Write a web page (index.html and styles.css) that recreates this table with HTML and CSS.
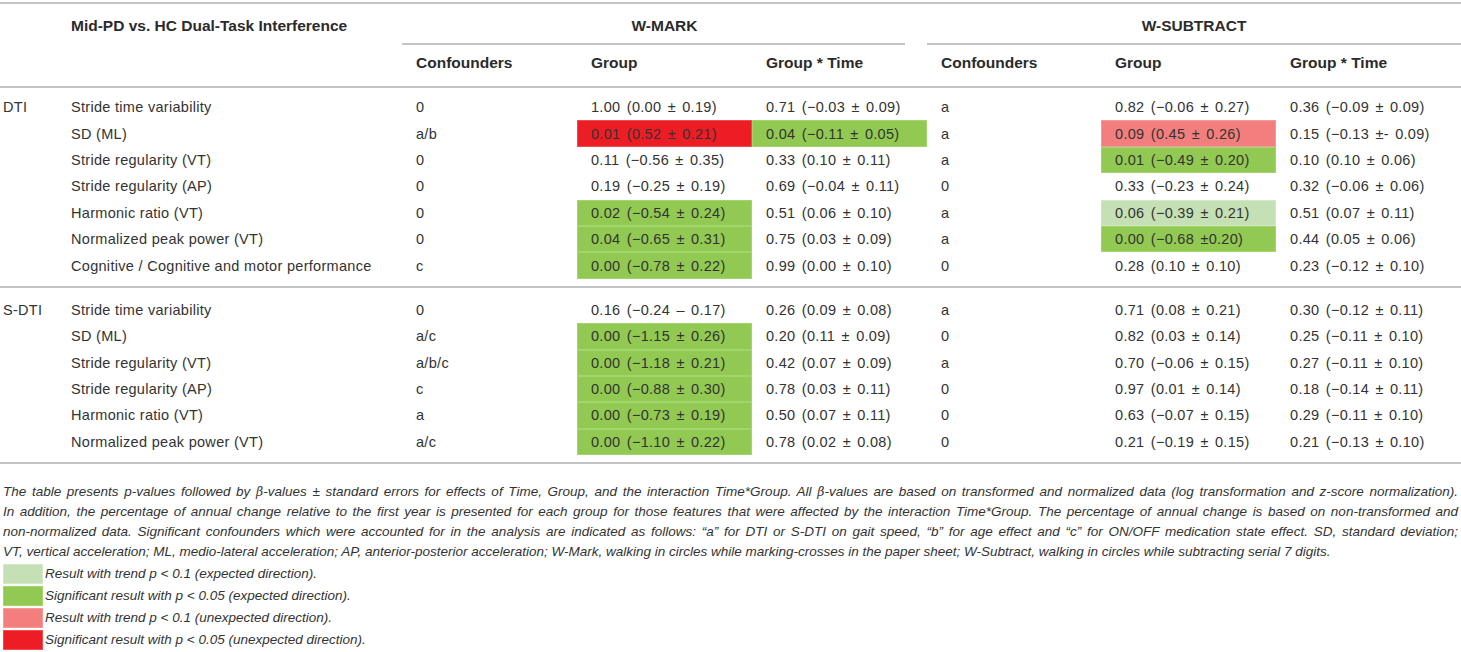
FILE: index.html
```html
<!DOCTYPE html>
<html lang="en">
<head>
  <meta charset="UTF-8" />
  <meta name="viewport" content="width=device-width, initial-scale=1.0" />
  <title>Dual-Task Interference Table</title>
  <link rel="stylesheet" href="styles.css">
</head>
<body>

  <section class="table-wrap">
    <table class="results">
      <colgroup>
        <col class="c-group">
        <col class="c-label">
        <col class="c-std">
        <col class="c-std">
        <col class="c-std">
        <col class="c-conf2">
        <col class="c-std">
        <col class="c-last">
      </colgroup>
      <thead>
        <tr class="head-top">
          <th></th>
          <th>Mid-PD vs. HC Dual-Task Interference</th>
          <th colspan="3" class="task"><div class="task-label mark">W-MARK</div></th>
          <th colspan="3" class="task"><div class="task-label">W-SUBTRACT</div></th>
        </tr>
        <tr class="head-sub">
          <th></th>
          <th></th>
          <th>Confounders</th>
          <th>Group</th>
          <th>Group * Time</th>
          <th>Confounders</th>
          <th>Group</th>
          <th>Group * Time</th>
        </tr>
      </thead>

      <tbody class="dti">
        <tr class="gap gap-top"><td colspan="8"></td></tr>
        <tr>
          <td>DTI</td><td>Stride time variability</td><td>0</td>
          <td class="val">1.00 (0.00 ± 0.19)</td><td class="val">0.71 (−0.03 ± 0.09)</td><td>a</td>
          <td class="val">0.82 (−0.06 ± 0.27)</td><td class="val">0.36 (−0.09 ± 0.09)</td>
        </tr>
        <tr>
          <td></td><td>SD (ML)</td><td>a/b</td>
          <td class="val sig-bad">0.01 (0.52 ± 0.21)</td><td class="val sig-good">0.04 (−0.11 ± 0.05)</td><td>a</td>
          <td class="val trend-bad">0.09 (0.45 ± 0.26)</td><td class="val">0.15 (−0.13 ±- 0.09)</td>
        </tr>
        <tr>
          <td></td><td>Stride regularity (VT)</td><td>0</td>
          <td class="val">0.11 (−0.56 ± 0.35)</td><td class="val">0.33 (0.10 ± 0.11)</td><td>a</td>
          <td class="val sig-good">0.01 (−0.49 ± 0.20)</td><td class="val">0.10 (0.10 ± 0.06)</td>
        </tr>
        <tr>
          <td></td><td>Stride regularity (AP)</td><td>0</td>
          <td class="val">0.19 (−0.25 ± 0.19)</td><td class="val">0.69 (−0.04 ± 0.11)</td><td>0</td>
          <td class="val">0.33 (−0.23 ± 0.24)</td><td class="val">0.32 (−0.06 ± 0.06)</td>
        </tr>
        <tr>
          <td></td><td>Harmonic ratio (VT)</td><td>0</td>
          <td class="val sig-good">0.02 (−0.54 ± 0.24)</td><td class="val">0.51 (0.06 ± 0.10)</td><td>a</td>
          <td class="val trend-good">0.06 (−0.39 ± 0.21)</td><td class="val">0.51 (0.07 ± 0.11)</td>
        </tr>
        <tr>
          <td></td><td>Normalized peak power (VT)</td><td>0</td>
          <td class="val sig-good">0.04 (−0.65 ± 0.31)</td><td class="val">0.75 (0.03 ± 0.09)</td><td>a</td>
          <td class="val sig-good">0.00 (−0.68 ±0.20)</td><td class="val">0.44 (0.05 ± 0.06)</td>
        </tr>
        <tr>
          <td></td><td>Cognitive / Cognitive and motor performance</td><td>c</td>
          <td class="val sig-good">0.00 (−0.78 ± 0.22)</td><td class="val">0.99 (0.00 ± 0.10)</td><td>0</td>
          <td class="val">0.28 (0.10 ± 0.10)</td><td class="val">0.23 (−0.12 ± 0.10)</td>
        </tr>
        <tr class="gap gap-bottom"><td colspan="8"></td></tr>
      </tbody>

      <tbody class="sdti">
        <tr class="gap gap-top"><td colspan="8"></td></tr>
        <tr>
          <td>S-DTI</td><td>Stride time variability</td><td>0</td>
          <td class="val">0.16 (−0.24 – 0.17)</td><td class="val">0.26 (0.09 ± 0.08)</td><td>a</td>
          <td class="val">0.71 (0.08 ± 0.21)</td><td class="val">0.30 (−0.12 ± 0.11)</td>
        </tr>
        <tr>
          <td></td><td>SD (ML)</td><td>a/c</td>
          <td class="val sig-good">0.00 (−1.15 ± 0.26)</td><td class="val">0.20 (0.11 ± 0.09)</td><td>0</td>
          <td class="val">0.82 (0.03 ± 0.14)</td><td class="val">0.25 (−0.11 ± 0.10)</td>
        </tr>
        <tr>
          <td></td><td>Stride regularity (VT)</td><td>a/b/c</td>
          <td class="val sig-good">0.00 (−1.18 ± 0.21)</td><td class="val">0.42 (0.07 ± 0.09)</td><td>a</td>
          <td class="val">0.70 (−0.06 ± 0.15)</td><td class="val">0.27 (−0.11 ± 0.10)</td>
        </tr>
        <tr>
          <td></td><td>Stride regularity (AP)</td><td>c</td>
          <td class="val sig-good">0.00 (−0.88 ± 0.30)</td><td class="val">0.78 (0.03 ± 0.11)</td><td>0</td>
          <td class="val">0.97 (0.01 ± 0.14)</td><td class="val">0.18 (−0.14 ± 0.11)</td>
        </tr>
        <tr>
          <td></td><td>Harmonic ratio (VT)</td><td>a</td>
          <td class="val sig-good">0.00 (−0.73 ± 0.19)</td><td class="val">0.50 (0.07 ± 0.11)</td><td>0</td>
          <td class="val">0.63 (−0.07 ± 0.15)</td><td class="val">0.29 (−0.11 ± 0.10)</td>
        </tr>
        <tr>
          <td></td><td>Normalized peak power (VT)</td><td>a/c</td>
          <td class="val sig-good">0.00 (−1.10 ± 0.22)</td><td class="val">0.78 (0.02 ± 0.08)</td><td>0</td>
          <td class="val">0.21 (−0.19 ± 0.15)</td><td class="val">0.21 (−0.13 ± 0.10)</td>
        </tr>
        <tr class="gap gap-bottom"><td colspan="8"></td></tr>
      </tbody>
    </table>

    <div class="notes">
      <p class="line">The table presents p-values followed by <span class="beta">β</span>-values ± standard errors for effects of Time, Group, and the interaction Time*Group. All <span class="beta">β</span>-values are based on transformed and normalized data (log transformation and z-score normalization).</p>
      <p class="line">In addition, the percentage of annual change relative to the first year is presented for each group for those features that were affected by the interaction Time*Group. The percentage of annual change is based on non-transformed and</p>
      <p class="line">non-normalized data. Significant confounders which were accounted for in the analysis are indicated as follows: “a” for DTI or S-DTI on gait speed, “b” for age effect and “c” for ON/OFF medication state effect. SD, standard deviation;</p>
      <p class="line last">VT, vertical acceleration; ML, medio-lateral acceleration; AP, anterior-posterior acceleration; W-Mark, walking in circles while marking-crosses in the paper sheet; W-Subtract, walking in circles while subtracting serial 7 digits.</p>

      <div class="legend">
        <div class="legend-item"><span class="swatch trend-good"></span>Result with trend p &lt; 0.1 (expected direction).</div>
        <div class="legend-item"><span class="swatch sig-good"></span>Significant result with p &lt; 0.05 (expected direction).</div>
        <div class="legend-item"><span class="swatch trend-bad"></span>Result with trend p &lt; 0.1 (unexpected direction).</div>
        <div class="legend-item"><span class="swatch sig-bad"></span>Significant result with p &lt; 0.05 (unexpected direction).</div>
      </div>
    </div>
  </section>

</body>
</html>
```

FILE: styles.css
```css
/* Page */
body {
  margin: 0;
  background: #ffffff;
  color: #333333;
  font-family: "Liberation Sans", Arial, sans-serif;
}

.table-wrap {
  padding-top: 2px;
}

/* Table */
.results {
  width: 1461px;
  border-collapse: collapse;
  table-layout: fixed;
  font-size: 14.5px;
  letter-spacing: 0.3px;
  border-top: 2px solid #c4c4c4;
}

.c-group { width: 57px; }
.c-label { width: 345px; }
.c-std { width: 175px; }
.c-conf2 { width: 174px; }
.c-last { width: 185px; }

.results th,
.results td {
  padding: 0 0 0 14px;
  text-align: left;
  white-space: nowrap;
  vertical-align: middle;
}

.results th:first-child,
.results td:first-child {
  padding-left: 3px;
}

.results td.val {
  word-spacing: 2px;
}

.results th {
  font-size: 15.5px;
  letter-spacing: 0;
  font-weight: bold;
  color: #2b2b2b;
  vertical-align: top;
  line-height: 16px;
}

/* Header rows */
.head-top th {
  padding-top: 14px;
}

.head-top th.task {
  padding: 14px 0 0 0;
  text-align: center;
}

.task-label {
  padding-bottom: 9px;
  border-bottom: 2px solid #c4c4c4;
}

.task-label.mark {
  margin-right: 22px;
  padding-left: 22px;
}

.head-sub th {
  height: 31px;
  padding-top: 10px;
  border-bottom: 2px solid #c4c4c4;
}

/* Body rows */
.results tbody {
  border-bottom: 2px solid #c4c4c4;
}

.results tbody td {
  height: 26.4px;
}

.results tr.gap td {
  height: 7px;
  padding: 0;
}

.results .dti tr.gap-top td {
  height: 6px;
}

.results .sdti tr.gap-top td {
  height: 9px;
}

/* Highlight colours */
.trend-good {
  background-color: #c6e0b5;
  box-shadow: inset 0 0 0 1px #d3e8c6;
}

.sig-good {
  background-color: #92c952;
  box-shadow: inset 0 0 0 1px #a4d46c;
}

.trend-bad {
  background-color: #f27f7e;
  box-shadow: inset 0 0 0 1px #f49a99;
}

.sig-bad {
  background-color: #ec1d25;
  box-shadow: inset 0 0 0 1px #f04c52;
}

/* Footnote */
.notes {
  padding: 18px 3px 0 3px;
  font-style: italic;
  font-size: 13.5px;
  color: #333333;
}

.notes .line {
  margin: 0;
  line-height: 20px;
  white-space: nowrap;
  text-align: justify;
  text-align-last: justify;
}

.notes .line.last {
  text-align-last: left;
}

.beta {
  font-family: "DejaVu Serif", serif;
  font-size: 12.5px;
}

/* Legend */
.legend {
  padding-top: 1px;
}

.legend-item {
  display: flex;
  align-items: center;
  height: 21px;
  margin-bottom: 1px;
}

.swatch {
  width: 40px;
  height: 20px;
  margin-right: 2px;
  box-sizing: border-box;
}
```
